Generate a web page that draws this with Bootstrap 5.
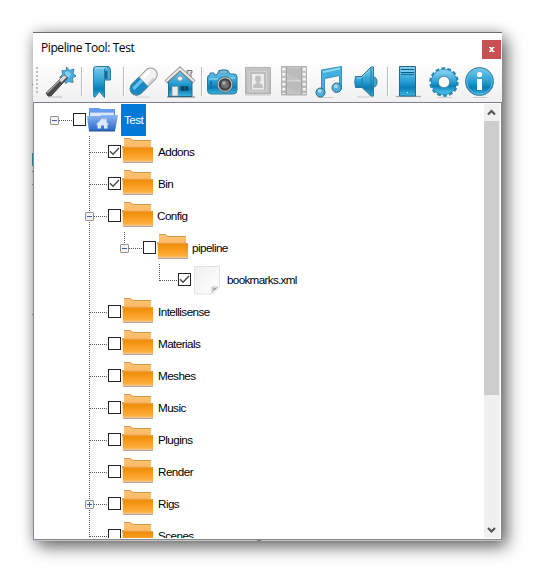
<!DOCTYPE html>
<html lang="en">
<head>
<meta charset="utf-8">
<meta name="viewport" content="width=device-width, initial-scale=1">
<title>Pipeline Tool: Test</title>
<link href="https://cdn.jsdelivr.net/npm/bootstrap@5.3.0/dist/css/bootstrap.min.css" rel="stylesheet">
<style>
  body { background:#fff; height:573px; padding:32px 0 0 33px; overflow:hidden; }
  svg { display:block; flex:none; }
  .tool-window { width:469px; height:508px; background:#fff; border-top:1px solid #6e6e70; box-shadow:5px 7px 16px 0 rgba(0,0,0,.56), 0 0 12px rgba(0,0,0,.2); }
  .title-bar { height:30px; padding-left:8px; font:12px/30px "Open Sans","Noto Sans",sans-serif; color:#000; }
  .title-text { letter-spacing:-.42px; }
  .close-box { width:19px; height:19px; margin:0 1px 0 0; background:#c75050; color:#fff; border-radius:0; align-self:flex-start; margin-top:7px; }
  .tool-strip { height:39px; background:linear-gradient(#fdfdfd,#f0f0f0); padding:1px 0 2px 3px; }
  .grip { width:7px; }
  .strip-btn { width:36px; height:36px; background:none; }
  .strip-sep { width:1px; height:29px; background:#bdbdbd; margin:3px 3px 0 2px; box-shadow:1px 0 #fff; }
  .tree-pane { height:438px; border:1px solid #828790; border-top-color:#7c7e8e; padding:1px 1px 1px 0; box-shadow:0 1px #c4c4c4; }
  .tree-list { padding-left:16px; font:11.7px/32px "Liberation Sans",Arial,sans-serif; color:#000; }
  .node-row { height:32px; }
  .tick-box { width:13px; height:13px; border:1px solid #222; background:#fff; margin:0 1px 1px 0; flex:none; }
  .node-text { height:32px; margin-left:2px; padding:0 2px; letter-spacing:-.56px; white-space:nowrap; }
  .node-text.deep { margin-left:1px; }
  .node-text.long { letter-spacing:-.68px; }
  .node-text.chosen { background:#0078d7; color:#fff; width:25px; padding-left:3px; }
  .scroll-track { width:16px; background:#f0f0f0; flex:none; }
  .scroll-thumb { height:274px; background:#cdcdcd; width:15px; }
  .edge-bit { position:absolute; left:32px; width:1px; background:#777; }
  .edge-bit.under { left:257px; width:4px; }
</style>
<script src="https://cdn.jsdelivr.net/npm/bootstrap@5.3.0/dist/js/bootstrap.bundle.min.js"></script>
</head>
<body>
<svg width="0" height="0" class="position-absolute">
  <defs>
    <linearGradient id="blue" x1="0" y1="0" x2="0" y2="1"><stop offset="0" stop-color="#78cbed"/><stop offset=".5" stop-color="#279fd4"/><stop offset=".72" stop-color="#087db7"/><stop offset="1" stop-color="#3cb5e1"/></linearGradient>
    <linearGradient id="grey" x1="0" y1="0" x2="0" y2="1"><stop offset="0" stop-color="#c8c8c8"/><stop offset="1" stop-color="#b4b4b4"/></linearGradient>
    <linearGradient id="back" x1="0" y1="0" x2="0" y2="1"><stop offset="0" stop-color="#ffc677"/><stop offset="1" stop-color="#fcb65c"/></linearGradient>
    <linearGradient id="front" x1="0" y1="0" x2="0" y2="1"><stop offset="0" stop-color="#ef8b08"/><stop offset=".65" stop-color="#faa329"/><stop offset="1" stop-color="#ffb44c"/></linearGradient>
    <linearGradient id="home" x1="0" y1="0" x2="0" y2="1"><stop offset="0" stop-color="#8db6f5"/><stop offset="1" stop-color="#2967c6"/></linearGradient>
    <linearGradient id="page" x1="0" y1="0" x2="1" y2="1"><stop offset="0" stop-color="#efefef"/><stop offset="1" stop-color="#fff"/></linearGradient>
    <symbol id="folder" viewBox="0 0 32 32">
      <path d="M2 3h7.500l2 2H29v8H2z" fill="url(#back)"/><path d="M2 2.500h6.500l2 2H29" fill="none" stroke="#c98c3b" stroke-width=".9"/>
      <path d="M0 10h2v.5h27v.5h2V12H0z" fill="#efae70"/><path d="M0 10h1v2H0z" fill="#f6a649"/>
      <path d="M.5 11.500H31v14H1z" fill="url(#front)"/><path d="M1 24.500h30v1.300H1z" fill="#f4bd79"/><path d="M1 26h30v1H1z" fill="#aaa7b0"/>
    </symbol>
    <symbol id="homefolder" viewBox="0 0 32 32">
      <path d="M2 4.500h10l2 1h14V12H2z" fill="#4d88e2"/><path d="M2 4h10l2 1h14v3H2z" fill="#659cf0"/><path d="M3 8.500h24V13H3z" fill="#dae8fa"/><path d="M2 12h26v14.500H2z" fill="#2b69c9"/>
      <path d="M0 12h13l2-1h16l-2.500 13.500L28 27H2z" fill="url(#home)"/><path d="M2 26.500h26v1H2z" fill="#244c91"/>
      <path d="M9 20.500l6.500-6.500 2 2v-1.500h2V18l2.500 2.500h-1.500v4H17v-3h-3v3h-3.500v-4z" fill="#dce8fb"/>
    </symbol>
    <symbol id="paper" viewBox="0 0 32 32">
      <path d="M2.500 2.500h25v20.500l-6 7h-19z" fill="url(#page)" stroke="#e2e2e2"/><path d="M20 28.500v-5.500h6z" fill="#eee" stroke="#b7b7b7" stroke-width=".9"/><path d="M21.500 26v-1.500h2.500z" fill="#fff" stroke="#888" stroke-width=".7"/>
    </symbol>
    <symbol id="dash" viewBox="0 0 23 32"><path d="M5 16.500h18" stroke="#555" stroke-dasharray="1 1"/></symbol>
    <symbol id="down" viewBox="0 0 23 32"><path d="M4.500 0v32" stroke="#555" stroke-dasharray="1 1"/></symbol>
    <symbol id="half" viewBox="0 0 23 32"><path d="M4.500 0v17" stroke="#555" stroke-dasharray="1 1"/></symbol>
    <symbol id="minus" viewBox="0 0 23 32"><rect x=".5" y="12.500" width="8" height="8" rx=".6" fill="#f4f4f4" stroke="#919191"/><path d="M2 16.500h5" stroke="#3c5fae"/></symbol>
    <symbol id="plus" viewBox="0 0 23 32"><use href="#minus"/><path d="M4.500 14v5" stroke="#3c5fae"/></symbol>
    <symbol id="check" viewBox="0 0 11 11"><path d="M1 5.200l3 3L10 2" fill="none" stroke="#444" stroke-width="1.300"/></symbol>
  </defs>
</svg>

<main class="tool-window d-flex flex-column">
  <header class="title-bar d-flex justify-content-between">
    <span class="title-text">Pipeline Tool: Test</span>
    <button class="close-box btn border-0 p-0" aria-label="Close"><svg width="19" height="19"><path d="M7 7h2l.7 1 .8-1h2v1h-.7l-1.200 1.500 1.200 1.500h.7v1h-2l-.8-1-.7 1H7v-1h.6l1.200-1.500L7.600 8H7z" fill="#fff"/></svg></button>
  </header>

  <nav class="tool-strip d-flex">
    <svg class="grip" width="7" height="36"><path d="M1 3v28" stroke="#bebebe" stroke-width="2" stroke-dasharray="2 2"/></svg>
    <button class="strip-btn border-0 p-0" aria-label="Wand"><svg width="36" height="36"><path d="M5 33h14" stroke="#000" opacity=".22"/><path d="M23.500 3l3 3.500L31 5l-1 4.500 3 2.500-3.500 2 .5 4.500-4.500-1-3 2-1.500-4-4.500-2 3-3-.5-4 4 .5z" fill="#45afe3" stroke="#4683a5"/><path d="M22 8l3-1 3 3-2 4-4-1z" fill="#7ed1f6"/><path d="M3 29l17-17 1.500-1 3 2.500-1 1.500L8 32H5z" fill="#4a4a4c" stroke="#333" stroke-width=".8"/><path d="M4 29l13-13" stroke="#aaa" stroke-width="1.500"/><path d="M16 16l5-5 3 2-5.500 5.500z" fill="#ddd" stroke="#777" stroke-width=".7"/></svg></button>
    <span class="strip-sep"></span>
    <button class="strip-btn border-0 p-0" aria-label="Bookmark"><svg width="36" height="36"><path d="M19.500 3.500c4-2 6 0 6 2v10.500h-6z" fill="#49add8" stroke="#27779f"/><path d="M20 7h2.500v8H20z" fill="#116991"/><path d="M8.500 7V5q0-2.500 3-2.500h12q-4 0-4 3.500v27.500l-5-6-5 6q-1-1-1-4z" fill="url(#blue)" stroke="#287ca5"/><path d="M10 4h12" stroke="#a5def5"/></svg></button>
    <span class="strip-sep"></span>
    <button class="strip-btn border-0 p-0" aria-label="Pill"><svg width="36" height="36"><path d="M9 33h14" stroke="#000" opacity=".12"/><g transform="rotate(-45 16.500 17.500)"><rect x="0" y="11.300" width="33" height="12.800" rx="6.400" fill="#f2f2f2" stroke="#999"/><path d="M16 11.300H6.500a6.400 6.400 0 0 0 0 12.800H16z" fill="#1688c2" stroke="#3c86a7"/><path d="M5.500 15.500H15" stroke="#67c1ec" stroke-width="3.500" stroke-linecap="round"/><path d="M19 14.500h8" stroke="#fff" stroke-width="3" stroke-linecap="round"/><path d="M18 22.500h8" stroke="#d4d4d4" stroke-width="2"/></g></svg></button>
    <button class="strip-btn border-0 p-0" aria-label="Home"><svg width="36" height="36"><path d="M24 6.500h5v2h-1v7h-4z" fill="#d9d9d9" stroke="#777"/><path d="M5.500 17L17 6l12 11v15.500H5.500z" fill="url(#blue)" stroke="#286f8e"/><path d="M3 18L17 5l14 13" fill="none" stroke="#777" stroke-width="4"/><path d="M3 17.500L17 4.800l14 12.700" fill="none" stroke="#e8e8e8" stroke-width="2.300"/><circle cx="17" cy="14.500" r="2.500" fill="#eee" stroke="#8ba4af"/><path d="M9 22.500h6V32H9z" fill="#ececec" stroke="#999" stroke-width=".8"/><path d="M18 22.500h7v4h-7z" fill="#064365" stroke="#15506f"/><path d="M22 22v5" stroke="#1b6c97"/><path d="M4 33h28" stroke="#31525f" opacity=".7"/></svg></button>
    <span class="strip-sep"></span>
    <button class="strip-btn border-0 p-0" aria-label="Camera"><svg width="36" height="36"><path d="M5 11V9h4v2l3-.5 2-4q5-1.500 9 0l2 3.500h4q3 0 3 3v13q0 4-4 4H6q-3.500 0-3.500-4V14q0-3 2.500-3z" fill="url(#blue)" stroke="#337898"/><path d="M14 9l1-2h7l1 2z" fill="#9bdcf6" stroke="#417f9b" stroke-width=".7"/><path d="M4 15h9M24 14h6" stroke="#9cdef7"/><path d="M6 17v8" stroke="#1774a0" stroke-width="2"/><circle cx="20" cy="20.500" r="7.800" fill="#b7c5cb" stroke="#52636c" stroke-width=".8"/><circle cx="20" cy="20.500" r="6.300" fill="#414345"/><circle cx="20" cy="20.500" r="4" fill="#686869"/><circle cx="19" cy="19" r="2" fill="#a6a6a7"/><circle cx="21" cy="22" r="1.700" fill="#777"/></svg></button>
    <button class="strip-btn border-0 p-0" aria-label="Portrait"><svg width="36" height="36"><path d="M4.500 3.500h25v26.500h-25z" fill="url(#grey)" stroke="#b2b2b2"/><path d="M6 5h22v24H6z" fill="#c3c3c3"/><path d="M8.500 7.500h17v19.500h-17z" fill="#bdbdbd" stroke="#d2d2d2"/><path d="M11 10h12v15.500H11z" fill="#ececec"/><path d="M12 24q0-4.500 3.500-4.500V18Q14 16.500 14 14.500q0-3 3-3t3 3q0 2-1.500 3.500v1.500q3.500 0 3.500 4.500z" fill="#bfbfbf"/><path d="M4 31.500h26" stroke="#ddd"/></svg></button>
    <button class="strip-btn border-0 p-0" aria-label="Film"><svg width="36" height="36"><path d="M4.500 2.500h25v28.500h-25z" fill="url(#grey)" stroke="#b2b2b2"/><path d="M6.800 4v26M27.300 4v26" stroke="#f6f6f6" stroke-width="3" stroke-dasharray="2.500 2.500"/><path d="M9.500 3v28M24.500 3v28" stroke="#a5a5a5"/><path d="M10 4h14v12H10zM10 18h14v12H10z" fill="#c3c3c3"/><path d="M10 4h14v12L10 9zM10 18h14v12l-14-7z" fill="#bbb"/><path d="M10 16.800h14" stroke="#dedede"/></svg></button>
    <button class="strip-btn border-0 p-0" aria-label="Music"><svg width="36" height="36"><path d="M4 33.500h17" stroke="#aaa" opacity=".5"/><path d="M8.500 6L28.500 2.500V25h-2V11.500l-15 3V29h-3z" fill="#45afe0" stroke="#2e88b2" stroke-width=".9"/><path d="M10 8l17-3.500" stroke="#8ed9f6" stroke-width="2"/><circle cx="7.500" cy="28.500" r="4.500" fill="#51afd7" stroke="#226988"/><circle cx="23.700" cy="23.700" r="4.700" fill="#51afd7" stroke="#226988"/><circle cx="6.700" cy="27" r="2" fill="#a5d9ed"/><circle cx="23" cy="22.200" r="2" fill="#a5d9ed"/></svg></button>
    <button class="strip-btn border-0 p-0" aria-label="Sound"><svg width="36" height="36"><path d="M8 33h17" stroke="#aaa" opacity=".5"/><path d="M24 13q4 0 4 5t-4 5z" fill="#3fa9d6" stroke="#2b7697"/><path d="M6.500 12.500h6L22 3h2.500v29H22l-9-8.500H6.500q-1.500-5.500 0-11z" fill="url(#blue)" stroke="#2d7898"/><path d="M13 12v12M22 4v27" stroke="#2d7897"/><path d="M8 14h4l9-8" fill="none" stroke="#8bd6f1"/></svg></button>
    <span class="strip-sep"></span>
    <button class="strip-btn border-0 p-0" aria-label="Server"><svg width="36" height="36"><path d="M5 32.500h25" stroke="#aaa" stroke-width="1.300"/><path d="M8.500 2.500h16v29.500h-16z" fill="url(#blue)" stroke="#27698a"/><path d="M10 5.500h13M10 8.500h13" stroke="#075a83" stroke-width="1.200"/><path d="M10 4h13M10 7h13" stroke="#8ed5f2"/><path d="M10 10.500h13" stroke="#16749d"/><path d="M16 28h1v1h-1z" fill="#fff"/></svg></button>
    <button class="strip-btn border-0 p-0" aria-label="Settings"><svg width="36" height="36"><path d="M10 33.500h15" stroke="#aaa" opacity=".5"/><circle cx="17" cy="18" r="13" fill="none" stroke="#2e8ab6" stroke-width="3.400" stroke-dasharray="3.700 2.134"/><circle cx="17" cy="18" r="9.300" fill="none" stroke="#247ca5" stroke-width="7.400"/><circle cx="17" cy="18" r="9.300" fill="none" stroke="url(#blue)" stroke-width="6.500"/><circle cx="17" cy="18" r="5.700" fill="#f9f9f9" stroke="#387f9d" stroke-width=".8"/></svg></button>
    <button class="strip-btn border-0 p-0" aria-label="Info"><svg width="36" height="36"><path d="M10 33.500h14" stroke="#aaa" opacity=".5"/><circle cx="16.500" cy="17.500" r="14" fill="url(#blue)" stroke="#337b9a"/><circle cx="16.500" cy="17.500" r="12.700" fill="none" stroke="#71bfdd" stroke-width=".8"/><circle cx="16.500" cy="10.500" r="2.600" fill="#fff"/><path d="M14 15h5v11h-5z" fill="#fff"/></svg></button>
  </nav>

  <section class="tree-pane d-flex justify-content-between">
    <div class="tree-list overflow-hidden">
      <div class="node-row d-flex align-items-center"><svg width="23" height="32"><use href="#dash"/><use href="#minus"/></svg><span class="tick-box"></span><svg width="32" height="32"><use href="#homefolder"/></svg><span class="node-text chosen">Test</span></div>
      <div class="node-row d-flex align-items-center"><svg width="35" height="32"></svg><svg width="23" height="32"><use href="#down"/><use href="#dash"/></svg><span class="tick-box"><svg width="11" height="11"><use href="#check"/></svg></span><svg width="32" height="32"><use href="#folder"/></svg><span class="node-text">Addons</span></div>
      <div class="node-row d-flex align-items-center"><svg width="35" height="32"></svg><svg width="23" height="32"><use href="#down"/><use href="#dash"/></svg><span class="tick-box"><svg width="11" height="11"><use href="#check"/></svg></span><svg width="32" height="32"><use href="#folder"/></svg><span class="node-text">Bin</span></div>
      <div class="node-row d-flex align-items-center"><svg width="35" height="32"></svg><svg width="23" height="32"><use href="#down"/><use href="#dash"/><use href="#minus"/></svg><span class="tick-box"></span><svg width="32" height="32"><use href="#folder"/></svg><span class="node-text deep">Config</span></div>
      <div class="node-row d-flex align-items-center"><svg width="35" height="32"></svg><svg width="35" height="32"><use href="#down" width="23" height="32"/></svg><svg width="23" height="32"><use href="#half"/><use href="#dash"/><use href="#minus"/></svg><span class="tick-box"></span><svg width="32" height="32"><use href="#folder"/></svg><span class="node-text deep">pipeline</span></div>
      <div class="node-row d-flex align-items-center"><svg width="35" height="32"></svg><svg width="35" height="32"><use href="#down" width="23" height="32"/></svg><svg width="35" height="32"></svg><svg width="23" height="32"><use href="#half"/><use href="#dash"/></svg><span class="tick-box"><svg width="11" height="11"><use href="#check"/></svg></span><svg width="32" height="32"><use href="#paper"/></svg><span class="node-text deep long">bookmarks.xml</span></div>
      <div class="node-row d-flex align-items-center"><svg width="35" height="32"></svg><svg width="23" height="32"><use href="#down"/><use href="#dash"/></svg><span class="tick-box"></span><svg width="32" height="32"><use href="#folder"/></svg><span class="node-text">Intellisense</span></div>
      <div class="node-row d-flex align-items-center"><svg width="35" height="32"></svg><svg width="23" height="32"><use href="#down"/><use href="#dash"/></svg><span class="tick-box"></span><svg width="32" height="32"><use href="#folder"/></svg><span class="node-text">Materials</span></div>
      <div class="node-row d-flex align-items-center"><svg width="35" height="32"></svg><svg width="23" height="32"><use href="#down"/><use href="#dash"/></svg><span class="tick-box"></span><svg width="32" height="32"><use href="#folder"/></svg><span class="node-text">Meshes</span></div>
      <div class="node-row d-flex align-items-center"><svg width="35" height="32"></svg><svg width="23" height="32"><use href="#down"/><use href="#dash"/></svg><span class="tick-box"></span><svg width="32" height="32"><use href="#folder"/></svg><span class="node-text">Music</span></div>
      <div class="node-row d-flex align-items-center"><svg width="35" height="32"></svg><svg width="23" height="32"><use href="#down"/><use href="#dash"/></svg><span class="tick-box"></span><svg width="32" height="32"><use href="#folder"/></svg><span class="node-text">Plugins</span></div>
      <div class="node-row d-flex align-items-center"><svg width="35" height="32"></svg><svg width="23" height="32"><use href="#down"/><use href="#dash"/></svg><span class="tick-box"></span><svg width="32" height="32"><use href="#folder"/></svg><span class="node-text">Render</span></div>
      <div class="node-row d-flex align-items-center"><svg width="35" height="32"></svg><svg width="23" height="32"><use href="#down"/><use href="#dash"/><use href="#plus"/></svg><span class="tick-box"></span><svg width="32" height="32"><use href="#folder"/></svg><span class="node-text">Rigs</span></div>
      <div class="node-row d-flex align-items-center"><svg width="35" height="32"></svg><svg width="23" height="32"><use href="#half"/><use href="#dash"/></svg><span class="tick-box"></span><svg width="32" height="32"><use href="#folder"/></svg><span class="node-text">Scenes</span></div>
    </div>
    <div class="scroll-track d-flex flex-column">
      <svg width="16" height="17"><path d="M4 10.500L7.500 7 11 10.500" fill="none" stroke="#555" stroke-width="2.200"/></svg>
      <div class="scroll-thumb"></div>
      <svg class="mt-auto" width="16" height="17"><path d="M4 7l3.500 3.500L11 7" fill="none" stroke="#555" stroke-width="2.200"/></svg>
    </div>
  </section>
</main>
<i class="edge-bit" style="top:84px;height:1px"></i>
<i class="edge-bit" style="top:153px;height:13px;background:#2b8297"></i>
<i class="edge-bit" style="top:171px;height:1px"></i>
<i class="edge-bit" style="top:184px;height:1px"></i>
<i class="edge-bit" style="top:314px;height:1px"></i>
<i class="edge-bit under" style="top:540px;height:1px"></i>
</body>
</html>
